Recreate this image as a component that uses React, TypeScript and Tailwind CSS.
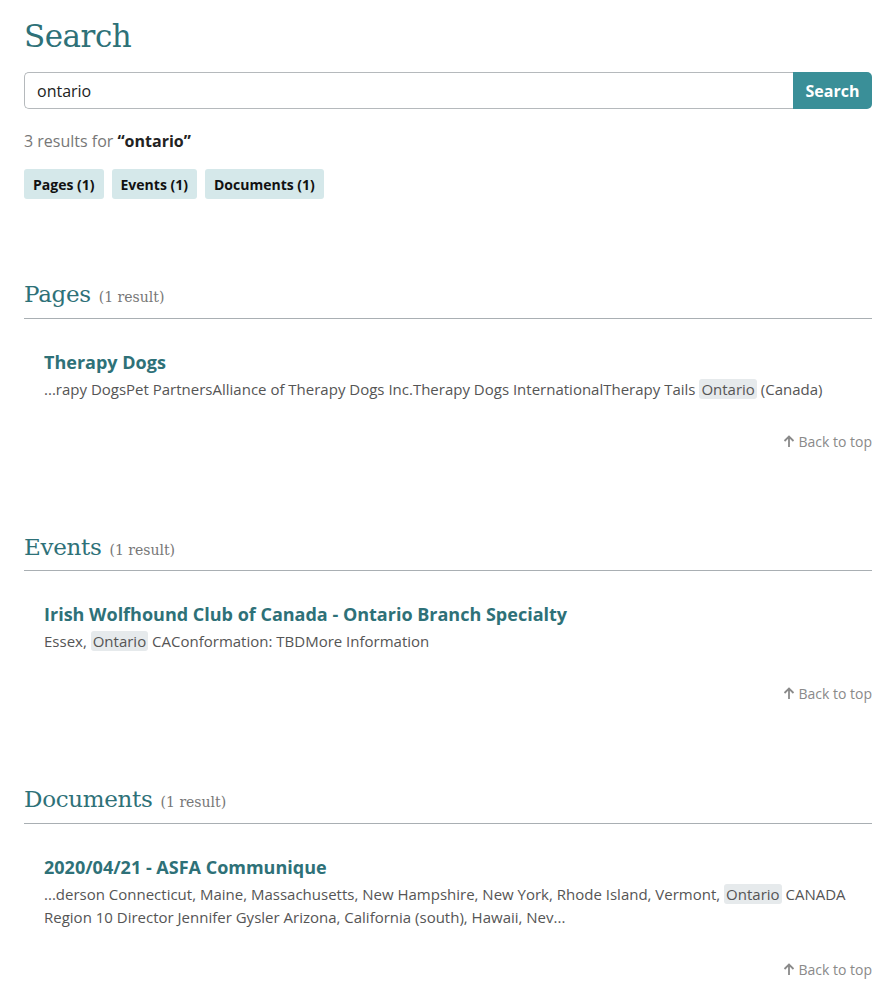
import React from "react";

const serif = { fontFamily: '"DejaVu Serif", "Liberation Serif", serif' };

function Hl({ children }: { children: React.ReactNode }) {
  return <mark className="bg-[#e6eaec] text-[#555] rounded-[3px] px-[2px]">{children}</mark>;
}

function BackToTop() {
  return (
    <div className="flex justify-end mt-[30px]">
      <a className="flex items-center gap-[3px] text-[14px] text-[#8a8a8a]">
        <svg width="12" height="13" viewBox="0 0 12 13" fill="none" stroke="#8a8a8a" strokeWidth="1.8">
          <path d="M6 12V1.5M1.5 6L6 1.5L10.5 6" />
        </svg>
        Back to top
      </a>
    </div>
  );
}

function Section({
  title,
  itemTitle,
  children,
}: {
  title: string;
  itemTitle: string;
  children: React.ReactNode;
}) {
  return (
    <section className="mt-[78px]">
      <h2 className="flex items-baseline gap-[8px] pb-[6px] border-b border-[#a9afb3]">
        <span style={serif} className="text-[23px] text-[#2e7178] tracking-[-0.3px]">{title}</span>
        <span style={serif} className="text-[14px] text-[#777]">(1 result)</span>
      </h2>
      <div className="px-[20px] pt-[30px]">
        <a className="block text-[18px] font-bold text-[#2e7178] leading-[26px]">{itemTitle}</a>
        <p className="text-[15px] text-[#555] leading-[23px] mt-[3px]">{children}</p>
      </div>
      <BackToTop />
    </section>
  );
}

export default function App() {
  return (
    <div
      className="bg-white min-h-[1002px] px-[24px] pt-[14px] pb-[10px]"
      style={{ fontFamily: '"Open Sans", "Liberation Sans", sans-serif' }}
    >
      <h1 style={serif} className="text-[31px] text-[#2e7178] leading-[44px] tracking-[-0.5px]">Search</h1>
      <div className="flex mt-[14px] h-[37px]">
        <input
          readOnly
          value="ontario"
          className="flex-1 border border-[#b5b9bc] border-r-0 rounded-l-[5px] px-[12px] text-[16px] text-[#222] outline-none"
        />
        <button className="bg-[#3a8f98] text-white font-bold text-[16px] px-[12px] rounded-r-[5px] w-[79px]">
          Search
        </button>
      </div>
      <p className="mt-[20px] text-[16px] text-[#777] leading-[24px]">
        3 results for <strong className="text-[#222]">“ontario”</strong>
      </p>
      <div className="flex gap-[8px] mt-[16px]">
        {["Pages (1)", "Events (1)", "Documents (1)"].map((t) => (
          <span key={t} className="bg-[#d5e8ea] text-[#111] text-[14px] font-bold rounded-[3px] px-[9px] h-[30px] flex items-center">
            {t}
          </span>
        ))}
      </div>
      <Section title="Pages" itemTitle="Therapy Dogs">
        ...rapy DogsPet PartnersAlliance of Therapy Dogs Inc.Therapy Dogs InternationalTherapy Tails <Hl>Ontario</Hl> (Canada)
      </Section>
      <Section title="Events" itemTitle="Irish Wolfhound Club of Canada - Ontario Branch Specialty">
        Essex, <Hl>Ontario</Hl> CAConformation: TBDMore Information
      </Section>
      <Section title="Documents" itemTitle="2020/04/21 - ASFA Communique">
        ...derson Connecticut, Maine, Massachusetts, New Hampshire, New York, Rhode Island, Vermont, <Hl>Ontario</Hl> CANADA
        Region 10 Director Jennifer Gysler Arizona, California (south), Hawaii, Nev...
      </Section>
    </div>
  );
}
